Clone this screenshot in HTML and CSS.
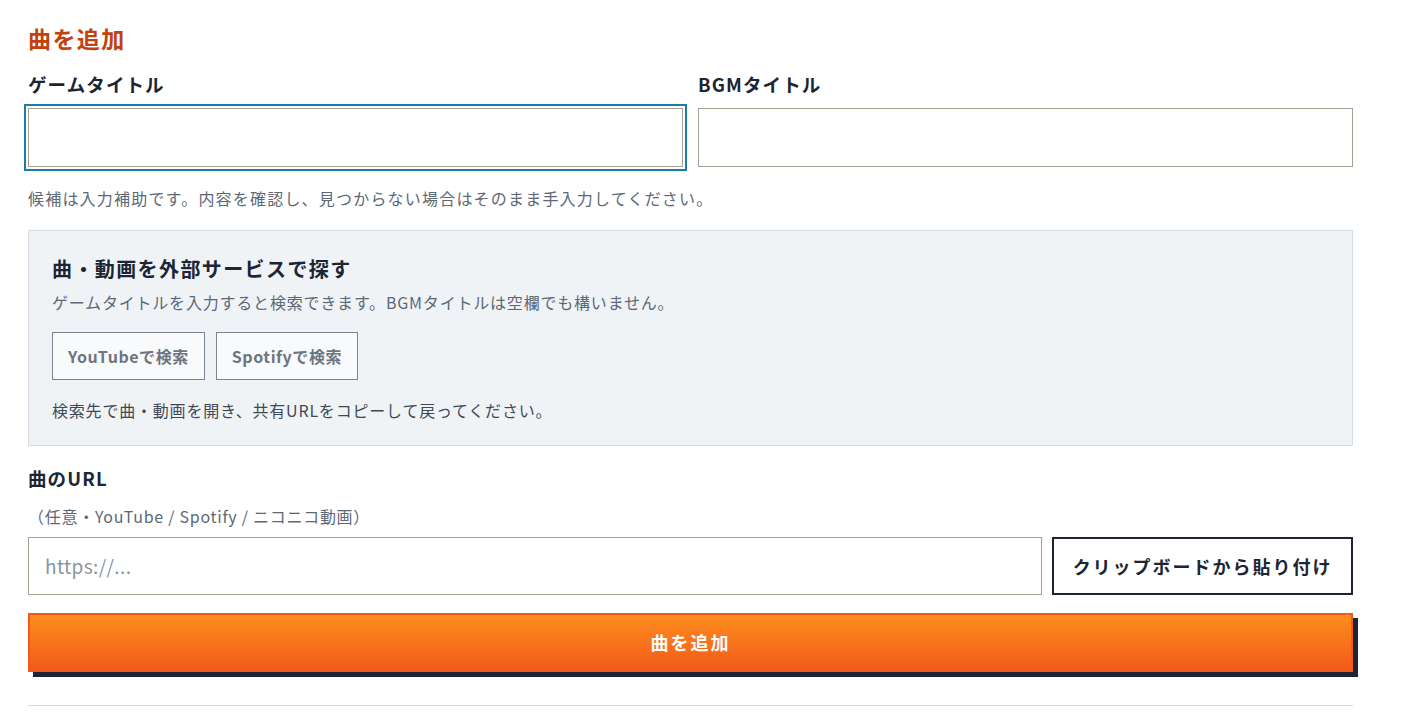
FILE: index.html
```
<!DOCTYPE html>
<html lang="ja">
<head>
<meta charset="utf-8">
<title>曲を追加</title>
<link rel="stylesheet" href="styles.css">
</head>
<body>
<main class="page">
  <h2 class="title">曲を追加</h2>
  <div class="cols">
    <div class="field">
      <label class="label" for="game">ゲームタイトル</label>
      <input class="input focused" id="game" type="text">
    </div>
    <div class="field">
      <label class="label" for="bgm">BGMタイトル</label>
      <input class="input" id="bgm" type="text">
    </div>
  </div>
  <p class="help">候補は入力補助です。内容を確認し、見つからない場合はそのまま手入力してください。</p>
  <section class="search-box">
    <h3 class="box-title">曲・動画を外部サービスで探す</h3>
    <p class="box-desc">ゲームタイトルを入力すると検索できます。BGMタイトルは空欄でも構いません。</p>
    <div class="btns">
      <button class="ghost" type="button">YouTubeで検索</button>
      <button class="ghost" type="button">Spotifyで検索</button>
    </div>
    <p class="box-note">検索先で曲・動画を開き、共有URLをコピーして戻ってください。</p>
  </section>
  <div class="url-field">
    <label class="label" for="url">曲のURL</label>
    <p class="sub">（任意・YouTube / Spotify / ニコニコ動画）</p>
    <div class="url-row">
      <input class="input url" id="url" type="text" placeholder="https://...">
      <button class="paste" type="button">クリップボードから貼り付け</button>
    </div>
  </div>
  <button class="submit" type="button">曲を追加</button>
  <hr class="divider">
</main>
</body>
</html>
```
FILE: styles.css
```
* { box-sizing: border-box; }
html, body { margin: 0; padding: 0; background: #ffffff; }
body {
  font-family: "Noto Sans CJK JP", "Noto Sans", sans-serif;
  color: #1b2533;
}
.page {
  width: 1381px;
  padding: 23px 28px 0 28px;
}
.title {
  margin: 0;
  font-size: 23px;
  line-height: 31px;
  font-weight: 700;
  color: #c2410c;
  letter-spacing: 0.06em;
}
.cols {
  display: grid;
  grid-template-columns: 1fr 1fr;
  column-gap: 15px;
  margin-top: 17px;
}
.field { display: flex; flex-direction: column; }
.label {
  display: block;
  font-size: 18.5px;
  line-height: 27px;
  font-weight: 700;
  letter-spacing: 0.06em;
  color: #1b2533;
}
.input {
  display: block;
  width: 100%;
  height: 59px;
  margin-top: 9.5px;
  border: 1px solid #a69f93;
  border-radius: 0;
  background: #ffffff;
  font-family: inherit;
  font-size: 19px;
  letter-spacing: 0.02em;
  padding: 0 16px;
  color: #1b2533;
}
.input.focused {
  outline: 2px solid #1a7fa8;
  outline-offset: 2px;
}
.input::placeholder { color: #8a949f; }
.help {
  margin: 19px 0 0 0;
  font-size: 16px;
  line-height: 24px;
  letter-spacing: 0.075em;
  color: #5d6876;
}
.search-box {
  margin-top: 20px;
  background: #f0f3f6;
  border: 1px solid #d6dce2;
  padding: 24px 23px 23px 23px;
}
.box-title {
  margin: 0;
  font-size: 20px;
  line-height: 28px;
  font-weight: 700;
  letter-spacing: 0.07em;
  color: #1b2533;
}
.box-desc, .box-note {
  margin: 7px 0 0 0;
  font-size: 16px;
  line-height: 24px;
  letter-spacing: 0.05em;
  color: #5d6876;
}
.box-note { color: #3f4956; margin-top: 18px; }
.btns {
  display: flex;
  gap: 11px;
  margin-top: 18px;
}
.ghost {
  height: 48px;
  padding: 0 15px;
  border: 1px solid #7b8491;
  border-radius: 0;
  background: #f9fafb;
  font-family: inherit;
  font-size: 16px;
  font-weight: 700;
  color: #6c7580;
  letter-spacing: 0.035em;
}
.url-field { margin-top: 19.5px; }
.sub {
  margin: 11.5px 0 0 0;
  font-size: 16px;
  line-height: 24px;
  letter-spacing: 0.045em;
  color: #5d6876;
}
.url-row {
  display: flex;
  gap: 10px;
  margin-top: 9px;
}
.input.url {
  flex: 1;
  height: 58px;
  margin-top: 0;
}
.paste {
  width: 301px;
  height: 58px;
  border: 2px solid #1b2533;
  border-radius: 0;
  background: #ffffff;
  font-family: inherit;
  font-size: 18px;
  font-weight: 700;
  letter-spacing: 0.11em;
  color: #1b2533;
}
.submit {
  display: block;
  width: 100%;
  height: 59px;
  margin-top: 18px;
  border: 2px solid #f15a1a;
  border-radius: 0;
  background: linear-gradient(to bottom, #fe8d1f, #f25a19);
  box-shadow: 5px 5px 0 #1b2533;
  font-family: inherit;
  font-size: 18px;
  font-weight: 700;
  letter-spacing: 0.11em;
  color: #ffffff;
}
.divider {
  margin: 33px 0 0 0;
  border: 0;
  border-top: 1px solid #d4d7db;
}
```
